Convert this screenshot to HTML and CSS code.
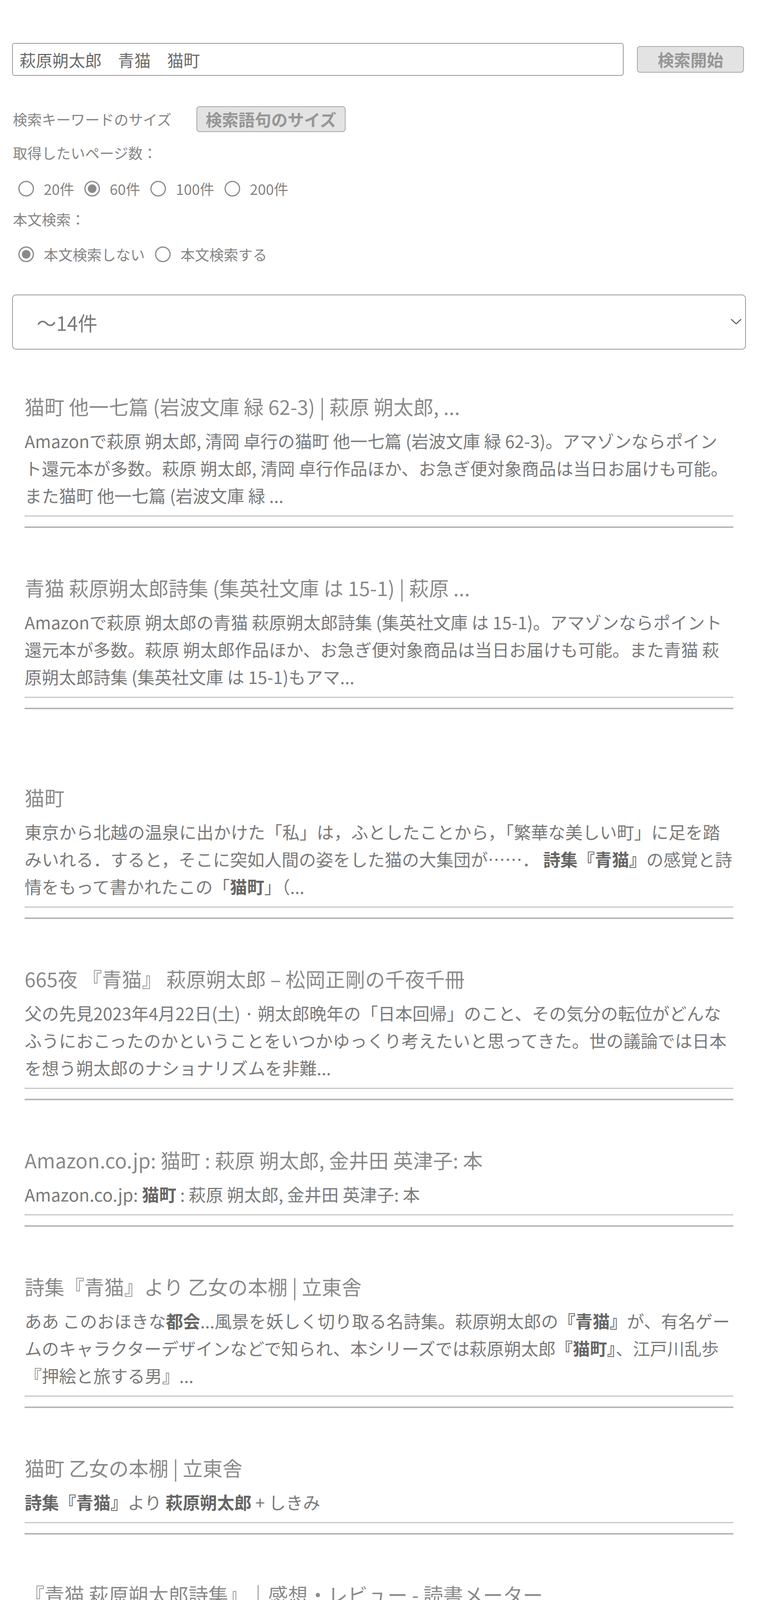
FILE: index.html
```html
<!DOCTYPE html>
<html lang="ja">
<head>
<meta charset="utf-8">
<title>検索</title>
<link rel="stylesheet" href="styles.css">
</head>
<body>
<div class="page">
  <form class="search-row">
    <input class="search-input" type="text" value="萩原朔太郎　青猫　猫町">
    <button class="btn btn-search" type="button">検索開始</button>
  </form>

  <div class="size-row">
    <span class="field-label">検索キーワードのサイズ</span>
    <button class="btn btn-size" type="button">検索語句のサイズ</button>
  </div>

  <div class="field-label block-label label-pages">取得したいページ数：</div>
  <div class="radio-row radio-row-pages">
    <label class="radio"><input type="radio" name="pages"><span>20件</span></label>
    <label class="radio"><input type="radio" name="pages" checked><span>60件</span></label>
    <label class="radio"><input type="radio" name="pages"><span>100件</span></label>
    <label class="radio"><input type="radio" name="pages"><span>200件</span></label>
  </div>

  <div class="field-label block-label label-body">本文検索：</div>
  <div class="radio-row radio-row-body">
    <label class="radio"><input type="radio" name="body" checked><span>本文検索しない</span></label>
    <label class="radio"><input type="radio" name="body"><span>本文検索する</span></label>
  </div>

  <div class="select-wrap">
    <select class="count-select">
      <option>～14件</option>
    </select>
    <svg class="select-arrow" viewBox="0 0 28 15" width="28" height="15" aria-hidden="true">
      <polyline points="2,2 14,13 26,2" fill="none" stroke="#666" stroke-width="3" stroke-linecap="round" stroke-linejoin="round"/>
    </svg>
  </div>

  <div class="results">
    <div class="result">
      <div class="result-title">猫町 他一七篇 (岩波文庫 緑 62-3) | 萩原 朔太郎, ...</div>
      <div class="result-snippet">Amazonで萩原 朔太郎, 清岡 卓行の猫町 他一七篇 (岩波文庫 緑 62-3)。アマゾンならポイント還元本が多数。萩原 朔太郎, 清岡 卓行作品ほか、お急ぎ便対象商品は当日お届けも可能。また猫町 他一七篇 (岩波文庫 緑 ...</div>
    </div>
    <hr class="sep">

    <div class="result">
      <div class="result-title">青猫 萩原朔太郎詩集 (集英社文庫 は 15-1) | 萩原 ...</div>
      <div class="result-snippet">Amazonで萩原 朔太郎の青猫 萩原朔太郎詩集 (集英社文庫 は 15-1)。アマゾンならポイント還元本が多数。萩原 朔太郎作品ほか、お急ぎ便対象商品は当日お届けも可能。また青猫 萩原朔太郎詩集 (集英社文庫 は 15-1)もアマ...</div>
    </div>
    <hr class="sep">

    <div class="result result-spaced">
      <div class="result-title">猫町</div>
      <div class="result-snippet">東京から北越の温泉に出かけた「私」は，ふとしたことから，「繁華な美しい町」に足を踏みいれる．すると，そこに突如人間の姿をした猫の大集団が……． <b>詩集『青猫』</b>の感覚と詩情をもって書かれたこの「<b>猫町</b>」（...</div>
    </div>
    <hr class="sep">

    <div class="result">
      <div class="result-title">665夜 『青猫』 萩原朔太郎 – 松岡正剛の千夜千冊</div>
      <div class="result-snippet">父の先見2023年4月22日(土) · 朔太郎晩年の「日本回帰」のこと、その気分の転位がどんなふうにおこったのかということをいつかゆっくり考えたいと思ってきた。世の議論では日本を想う朔太郎のナショナリズムを非難...</div>
    </div>
    <hr class="sep">

    <div class="result">
      <div class="result-title">Amazon.co.jp: 猫町 : 萩原 朔太郎, 金井田 英津子: 本</div>
      <div class="result-snippet">Amazon.co.jp: <b>猫町</b> : 萩原 朔太郎, 金井田 英津子: 本</div>
    </div>
    <hr class="sep">

    <div class="result">
      <div class="result-title">詩集『青猫』より 乙女の本棚 | 立東舎</div>
      <div class="result-snippet">ああ このおほきな<b>都会</b>...風景を妖しく切り取る名詩集。萩原朔太郎の<b>『青猫』</b>が、有名ゲームのキャラクターデザインなどで知られ、本シリーズでは萩原朔太郎<b>『猫町』</b>、江戸川乱歩『押絵と旅する男』...</div>
    </div>
    <hr class="sep">

    <div class="result">
      <div class="result-title">猫町 乙女の本棚 | 立東舎</div>
      <div class="result-snippet"><b>詩集『青猫』</b>より <b>萩原朔太郎</b> + しきみ</div>
    </div>
    <hr class="sep">

    <div class="result">
      <div class="result-title">『青猫 萩原朔太郎詩集』｜感想・レビュー - 読書メーター</div>
      <div class="result-snippet">出版社：集英社 · この機能をご利用になるには会員登録（無料）のうえ、ログインする<b>必要</b>があります。</div>
    </div>
    <hr class="sep">

    <div class="result">
      <div class="result-title">詩学の友</div>
      <div class="result-snippet">萩原朔太郎は、日本の口語自由詩をきりひらいた詩人といわれています。（日初の口語自由詩は、川路柳虹が1907年に発表した「<b>塵溜</b>」のようですが）· 上に引用した詩「<b>青猫</b>」を表題作とする詩集<b>『青猫』</b>の序をみ...</div>
    </div>
    <hr class="sep">
  </div>
</div>
</body>
</html>
```

FILE: styles.css
```css
html, body {
  margin: 0;
  padding: 0;
  background: #ffffff;
}

body {
  font-family: "Noto Sans CJK JP", "Noto Sans", sans-serif;
  color: #7a7a7a;
}

.page {
  padding: 0 31px;
}

/* search row */
.search-row {
  display: flex;
  align-items: center;
  gap: 34px;
  margin: 0;
  padding-top: 110px;
}

.search-input {
  box-sizing: border-box;
  width: 1566px;
  height: 84px;
  border: 2px solid #9a9a9a;
  border-radius: 6px;
  padding: 0 17px;
  font-family: inherit;
  font-size: 42px;
  color: #6a6a6a;
  background: #fff;
  outline: none;
}

.btn {
  box-sizing: border-box;
  font-family: inherit;
  font-size: 42px;
  font-weight: 700;
  color: #969696;
  background: #e3e3e3;
  border: 2px solid #a8a8a8;
  border-radius: 8px;
  line-height: 1;
  padding: 0;
  cursor: pointer;
}

.btn-search {
  width: 274px;
  height: 68px;
}

/* keyword size row */
.size-row {
  display: flex;
  align-items: center;
  gap: 64px;
  margin-top: 78px;
  height: 66px;
}

.field-label {
  font-size: 37px;
  color: #858585;
  padding-left: 2px;
}

.btn-size {
  width: 382px;
  height: 66px;
}

.block-label {
  line-height: 56px;
  height: 56px;
}

.label-pages {
  margin-top: 25px;
}

.label-body {
  margin-top: 22px;
}

/* radios */
.radio-row {
  display: flex;
  align-items: center;
  gap: 26px;
  height: 56px;
  padding-left: 16px;
  font-size: 37px;
  color: #858585;
}

.radio-row-pages {
  margin-top: 36px;
}

.radio-row-body {
  margin-top: 34px;
}

.radio {
  display: inline-flex;
  align-items: center;
  gap: 25px;
}

.radio input {
  appearance: none;
  -webkit-appearance: none;
  box-sizing: border-box;
  width: 40px;
  height: 40px;
  margin: 0;
  border: 3px solid #8a8a8a;
  border-radius: 50%;
  background: #fff;
}

.radio input:checked {
  background: #8a8a8a;
  box-shadow: inset 0 0 0 6px #fff;
}

/* select */
.select-wrap {
  position: relative;
  margin-top: 75px;
}

.count-select {
  appearance: none;
  -webkit-appearance: none;
  box-sizing: border-box;
  display: block;
  width: 100%;
  height: 141px;
  border: 2px solid #9a9a9a;
  border-radius: 10px;
  background: #fff;
  padding: 0 0 0 61px;
  font-family: inherit;
  font-size: 50px;
  color: #7a7a7a;
  outline: none;
}

.select-arrow {
  position: absolute;
  right: 11px;
  top: 62px;
  pointer-events: none;
}

/* results */
.results {
  margin: 4px 32px 0;
}

.result {
  padding: 101px 0 17px;
  border-bottom: 2px solid #b0b0b0;
}

.result-spaced {
  padding-top: 174px;
}

.result-title {
  font-size: 51px;
  line-height: 80px;
  color: #8a8a8a;
}

.result-snippet {
  margin-top: 13px;
  font-size: 44px;
  line-height: 70px;
  color: #7a7a7a;
}

.result-snippet b {
  color: #666;
  font-weight: 700;
}

.sep {
  margin: 26px 0 11px;
  height: 0;
  border: 0;
  border-top: 2px solid #a0a0a0;
  border-bottom: 2px solid #cfcfcf;
}
```
